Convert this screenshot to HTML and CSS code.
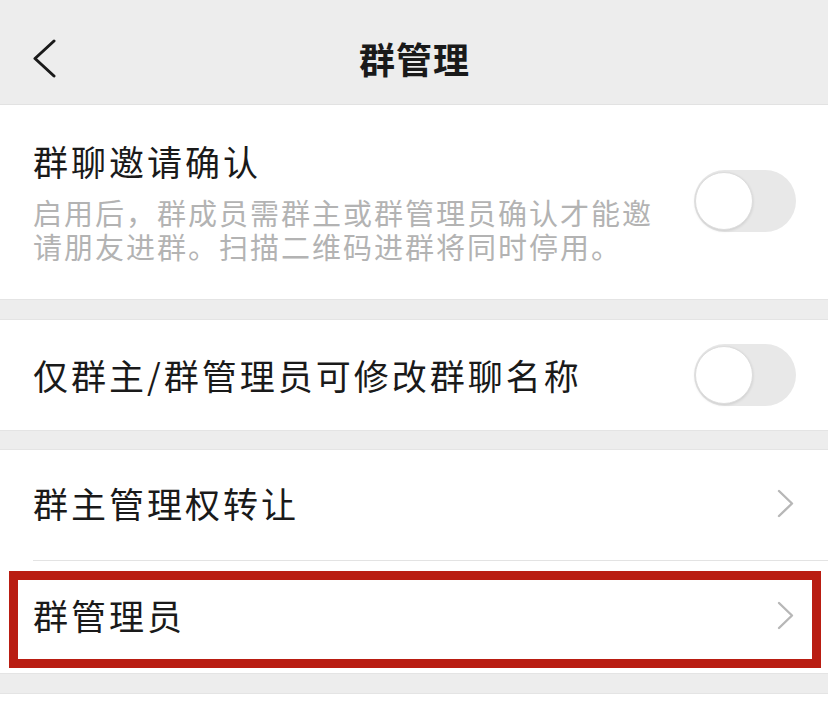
FILE: index.html
```html
<!DOCTYPE html>
<html lang="zh-CN">
<head>
<meta charset="utf-8">
<title>群管理</title>
<link rel="stylesheet" href="styles.css">
</head>
<body>
<header class="nav">
  <svg class="back" width="26" height="40" viewBox="0 0 26 40" aria-hidden="true">
    <path d="M22 2 L3 19.5 L22 37" fill="none" stroke="#1a1a1a" stroke-width="3" stroke-linecap="round" stroke-linejoin="round"/>
  </svg>
  <h1 class="nav-title">群管理</h1>
</header>

<section class="group first">
  <div class="cell cell-desc">
    <div class="cell-text">
      <div class="cell-title">群聊邀请确认</div>
      <p class="cell-sub">启用后，群成员需群主或群管理员确认才能邀请朋友进群。扫描二维码进群将同时停用。</p>
    </div>
    <div class="switch"><span class="knob"></span></div>
  </div>
</section>

<section class="group second">
  <div class="cell">
    <div class="cell-title">仅群主/群管理员可修改群聊名称</div>
    <div class="switch"><span class="knob"></span></div>
  </div>
</section>

<section class="group third">
  <div class="cell link">
    <div class="cell-title">群主管理权转让</div>
    <svg class="arrow" width="18" height="30" viewBox="0 0 18 30" aria-hidden="true">
      <path d="M3 2 L16 14.5 L3 27" fill="none" stroke="#b7b7b7" stroke-width="2.4" stroke-linecap="round" stroke-linejoin="round"/>
    </svg>
  </div>
  <div class="cell link last">
    <div class="cell-title">群管理员</div>
    <svg class="arrow" width="18" height="30" viewBox="0 0 18 30" aria-hidden="true">
      <path d="M3 2 L16 14.5 L3 27" fill="none" stroke="#b7b7b7" stroke-width="2.4" stroke-linecap="round" stroke-linejoin="round"/>
    </svg>
    <div class="highlight"></div>
  </div>
</section>

<section class="group tail"></section>
</body>
</html>
```

FILE: styles.css
```css
* { box-sizing: border-box; }

html, body {
  margin: 0;
  padding: 0;
}

body {
  background: #ededed;
  font-family: "Noto Sans CJK SC", "Noto Sans", sans-serif;
  color: #1a1a1a;
  width: 828px;
  height: 720px;
  overflow: hidden;
}

.nav {
  height: 105px;
  border-bottom: 1px solid #e2e2e2;
  display: flex;
  align-items: center;
  justify-content: center;
  position: relative;
  background: #ededed;
}

.back {
  position: absolute;
  left: 32px;
  top: 39px;
}

.nav-title {
  margin: 0;
  font-size: 36px;
  font-weight: 600;
  letter-spacing: 1px;
  line-height: 1;
  padding-left: 1px;
  padding-top: 12px;
}

.group {
  background: #ffffff;
  border-top: 1px solid #e4e4e4;
  border-bottom: 1px solid #e4e4e4;
}

.first {
  margin-top: 0;
  border-top: none;
}

.second { margin-top: 19px; }
.third  { margin-top: 18px; }
.tail   { margin-top: 19px; height: 40px; border-bottom: none; }

.cell {
  display: flex;
  align-items: center;
  justify-content: space-between;
  padding: 0 32px 0 33px;
  height: 110px;
  position: relative;
}

.cell-desc {
  height: auto;
  padding-top: 34px;
  padding-bottom: 36px;
}

.cell-text {
  display: flex;
  flex-direction: column;
}

.cell-title {
  font-size: 35px;
  letter-spacing: 3px;
  line-height: 44px;
  white-space: nowrap;
}

.link .cell-title {
  padding-bottom: 4px;
}

.cell-sub {
  margin: 12px 0 0;
  width: 626px;
  font-size: 29px;
  letter-spacing: 2px;
  line-height: 34px;
  color: #b3b3b3;
}

.switch {
  width: 102px;
  height: 62px;
  border-radius: 31px;
  background: #e8e8e8;
  position: relative;
  flex: none;
}

.knob {
  position: absolute;
  left: 1px;
  top: 2px;
  width: 58px;
  height: 58px;
  border-radius: 50%;
  background: #ffffff;
  border: 1px solid #dddddd;
  box-shadow: 0 1px 3px rgba(0, 0, 0, 0.12);
}

.link.last {
  height: 112px;
}

.link + .link::before {
  content: "";
  position: absolute;
  left: 33px;
  right: 0;
  top: -1px;
  height: 1px;
  background: #e3e3e3;
}

.link + .link {
  margin-top: 1px;
}

.arrow {
  flex: none;
  margin-right: 2px;
  margin-bottom: 2px;
}

.highlight {
  position: absolute;
  left: 9px;
  top: 10px;
  width: 812px;
  height: 97px;
  border: 9px solid #b91d12;
  pointer-events: none;
}
```
